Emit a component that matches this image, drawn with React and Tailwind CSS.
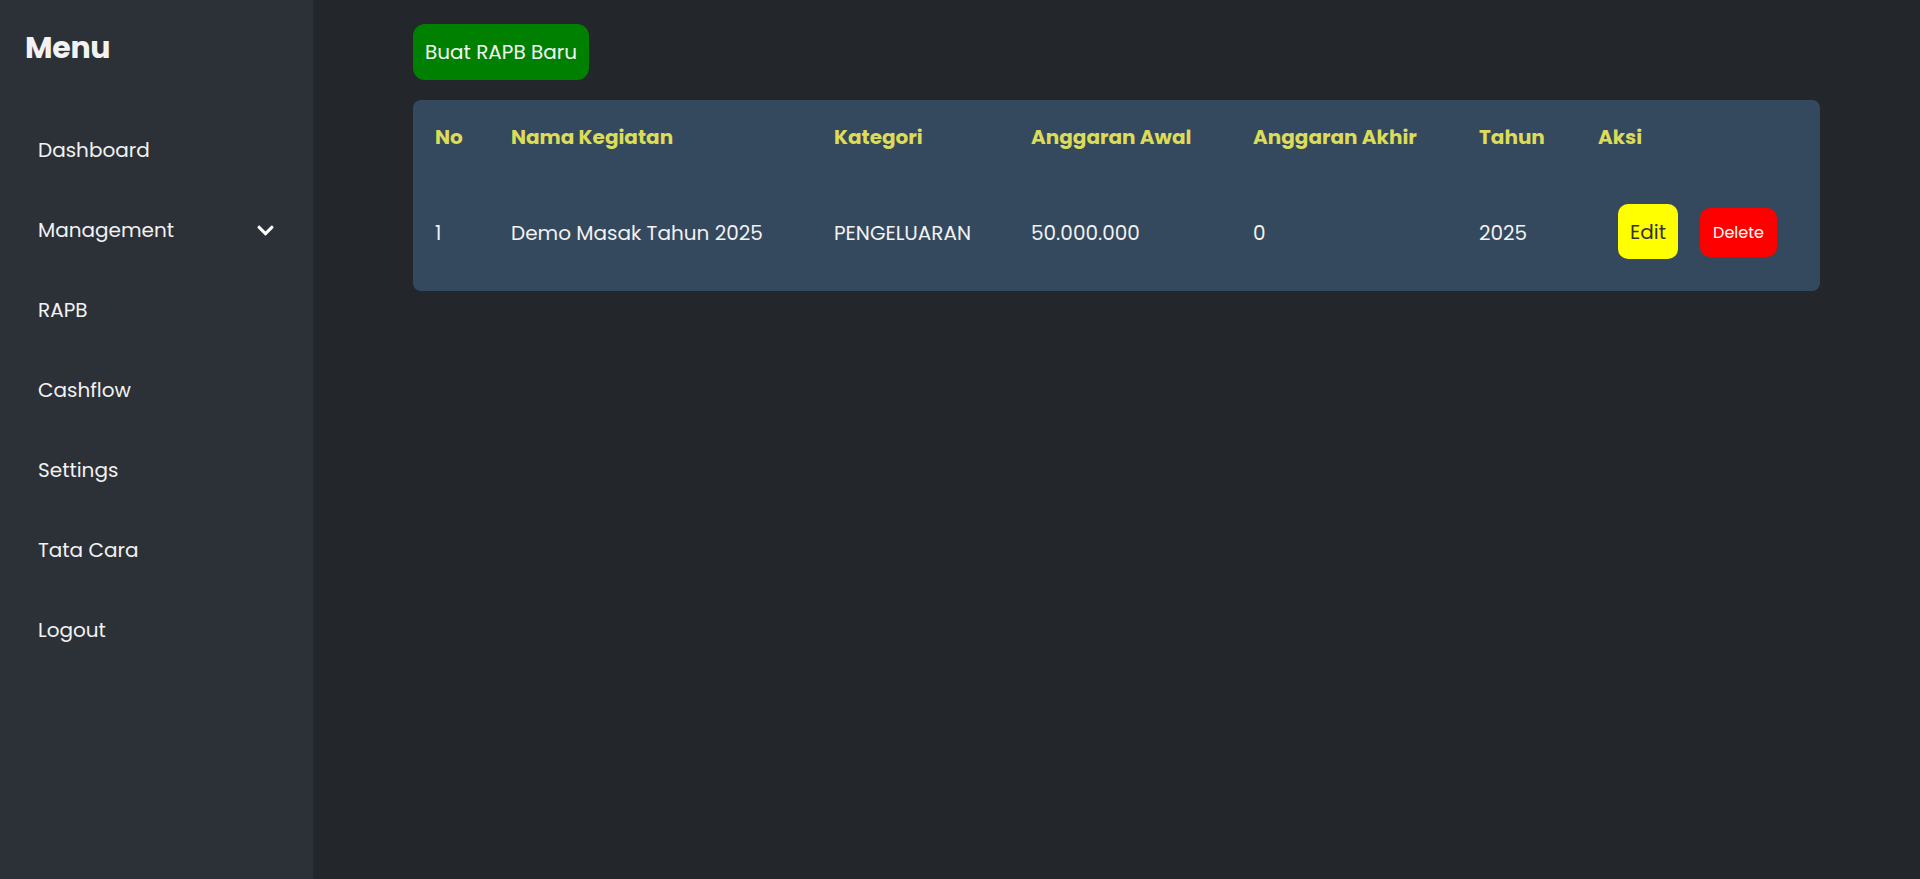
import React from "react";
import { FaChevronDown } from "react-icons/fa";

const font = { fontFamily: "Poppins, Inter, 'Noto Sans', sans-serif" };

const items = ["Dashboard", "Management", "RAPB", "Cashflow", "Settings", "Tata Cara", "Logout"];

export default function App() {
  return (
    <div style={font} className="flex min-h-screen h-[879px] w-full bg-[#23262b] text-white">
      <aside className="w-[313px] shrink-0 bg-[#2c3138] flex flex-col">
        <h1 className="pl-[25px] pt-[28px] h-[110px] text-[30px] leading-[40px] font-bold text-[#f2f2f2] tracking-[-0.3px]">Menu</h1>
        <nav className="flex flex-col">
          {items.map((it) => (
            <div key={it} className="h-[80px] flex items-center justify-between pl-[38px] pr-[38px] text-[20px] text-[#f2f2f2]">
              <span>{it}</span>
              {it === "Management" && <FaChevronDown className="w-[19px] h-[19px] text-white" />}
            </div>
          ))}
        </nav>
      </aside>
      <main className="flex-1 px-[100px] pt-[24px]">
        <button className="h-[56px] px-[12px] rounded-xl bg-[#008000] text-[20px] text-[#f5f5f5]">Buat RAPB Baru</button>
        <div className="mt-[20px] rounded-lg bg-[#34495e] pl-[22px]">
          <div className="grid grid-cols-[76px_323px_197px_222px_226px_119px_1fr] h-[74px] items-center text-[20px] font-bold text-[#dcdc58]">
            <div>No</div>
            <div>Nama Kegiatan</div>
            <div>Kategori</div>
            <div>Anggaran Awal</div>
            <div>Anggaran Akhir</div>
            <div>Tahun</div>
            <div>Aksi</div>
          </div>
          <div className="grid grid-cols-[76px_323px_197px_222px_226px_119px_1fr] h-[117px] items-center text-[20px] text-[#f2f2f2]">
            <div>1</div>
            <div>Demo Masak Tahun 2025</div>
            <div>PENGELUARAN</div>
            <div>50.000.000</div>
            <div>0</div>
            <div>2025</div>
            <div className="flex items-center gap-[22px] pl-[20px]">
              <button className="w-[60px] h-[55px] mb-[2px] rounded-[10px] bg-[#ffff00] text-[20px] text-[#333]">Edit</button>
              <button className="w-[77px] h-[49px] rounded-[10px] bg-[#ff0000] text-[16px] text-white">Delete</button>
            </div>
          </div>
        </div>
      </main>
    </div>
  );
}
